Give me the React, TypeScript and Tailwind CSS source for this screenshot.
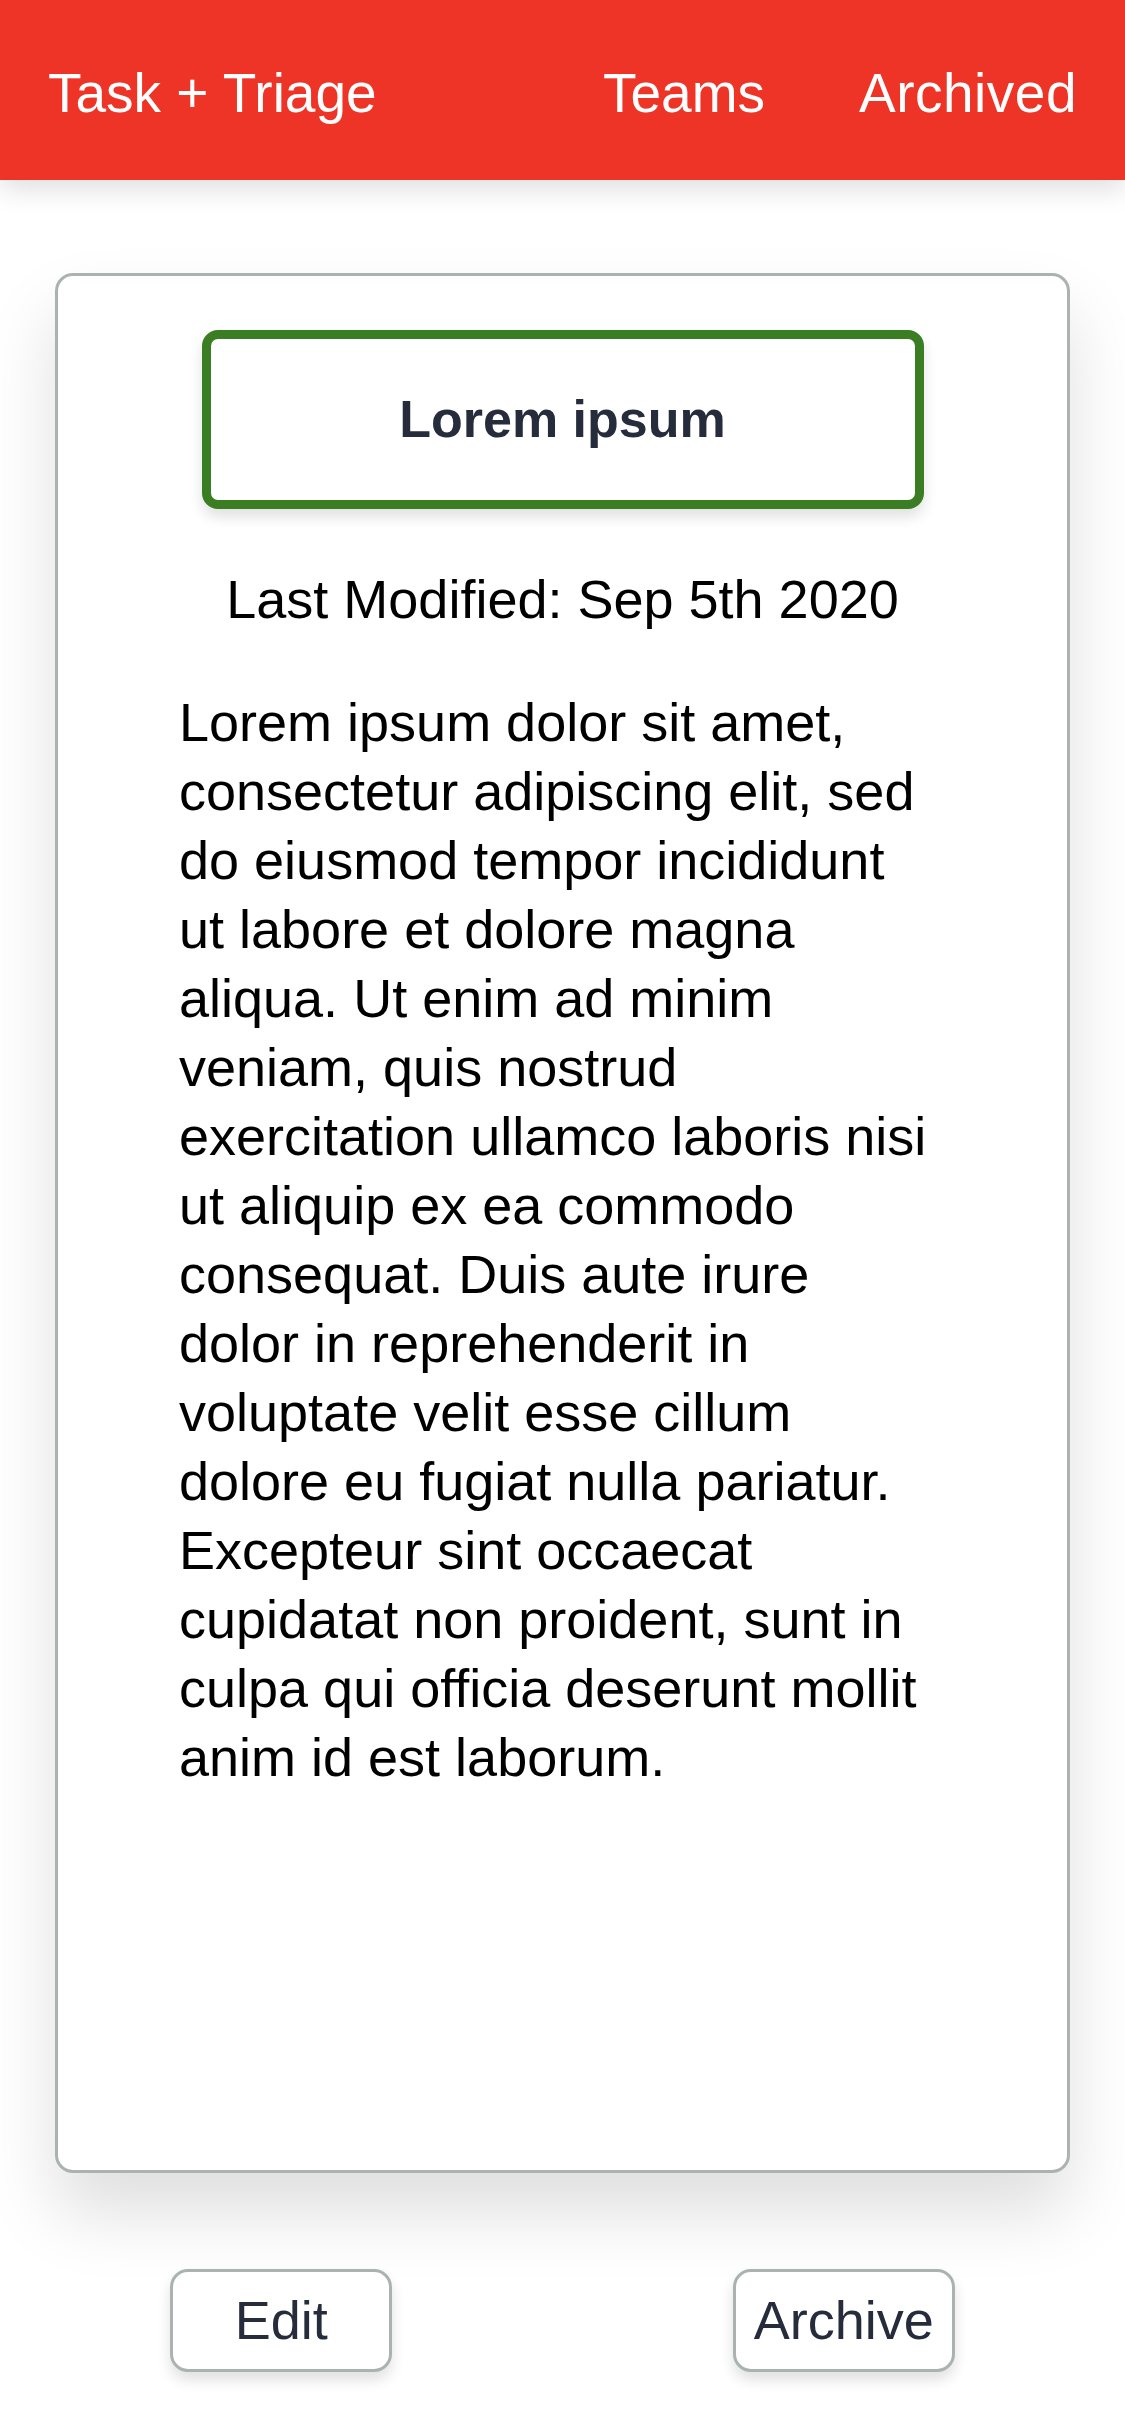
import React from "react";

const text =
  "Lorem ipsum dolor sit amet, consectetur adipiscing elit, sed do eiusmod tempor incididunt ut labore et dolore magna aliqua. Ut enim ad minim veniam, quis nostrud exercitation ullamco laboris nisi ut aliquip ex ea commodo consequat. Duis aute irure dolor in reprehenderit in voluptate velit esse cillum dolore eu fugiat nulla pariatur. Excepteur sint occaecat cupidatat non proident, sunt in culpa qui officia deserunt mollit anim id est laborum.";

export default function App() {
  return (
    <div
      className="min-h-[2436px] w-[1125px] bg-white"
      style={{ fontFamily: '"Liberation Sans", Arial, sans-serif' }}
    >
      <header className="relative z-10 flex h-[180px] items-center justify-between bg-[#ee3427] px-[48px] pt-[6px] text-[55px] leading-[69px] text-white shadow-[0_10px_24px_rgba(0,0,0,0.12)]">
        <div>Task + Triage</div>
        <nav className="flex gap-[94px]">
          <span>Teams</span>
          <span className="tracking-[0.5px]">Archived</span>
        </nav>
      </header>

      <main className="px-[55px] pt-[93px]">
        <section className="flex h-[1900px] flex-col items-center rounded-[18px] border-[3px] border-[#aab3af] bg-white pt-[54px] shadow-[0_40px_70px_rgba(0,0,0,0.13)]">
          <div className="flex h-[179px] w-[722px] items-center justify-center rounded-[16px] border-[9px] border-[#3a7d23] bg-white text-[52px] font-bold leading-[69px] text-[#262c3b] shadow-[0_8px_14px_rgba(0,0,0,0.12)]">
            Lorem ipsum
          </div>
          <div className="mt-[56px] text-[54px] leading-[69px] text-black">
            Last Modified: Sep 5th 2020
          </div>
          <p className="mt-[54px] w-full pl-[121px] pr-[124px] text-[54px] leading-[69px] text-black">
            {text}
          </p>
        </section>
      </main>

      <div className="flex justify-around pt-[96px]">
        <button className="flex h-[103px] w-[222px] items-center justify-center rounded-[18px] border-[3px] border-[#aab3af] bg-white text-[54px] leading-[69px] text-[#262c3b] shadow-[0_8px_14px_rgba(0,0,0,0.12)]">
          Edit
        </button>
        <button className="flex h-[103px] w-[222px] items-center justify-center rounded-[18px] border-[3px] border-[#aab3af] bg-white text-[54px] leading-[69px] text-[#262c3b] shadow-[0_8px_14px_rgba(0,0,0,0.12)]">
          Archive
        </button>
      </div>
    </div>
  );
}
